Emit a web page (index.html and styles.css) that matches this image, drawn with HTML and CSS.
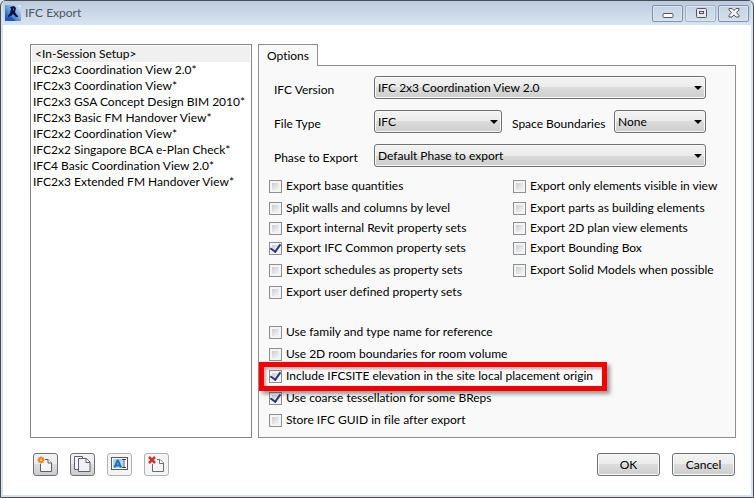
FILE: index.html
```html
<!DOCTYPE html>
<html lang="en">
<head>
<meta charset="utf-8">
<title>IFC Export</title>
<link rel="stylesheet" href="styles.css">
</head>
<body>
<div class="window">
  <header class="titlebar">
    <svg class="logo" width="16" height="16" viewBox="0 0 16 16" aria-hidden="true">
      <defs>
        <linearGradient id="logo-bg" x1="0" y1="1" x2="1" y2="0">
          <stop offset="0" stop-color="#0b3c9c"/>
          <stop offset=".45" stop-color="#5f96d6"/>
          <stop offset="1" stop-color="#e4f0fa"/>
        </linearGradient>
      </defs>
      <rect width="16" height="16" fill="url(#logo-bg)"/>
      <path d="M5 2l4-1 2 2-1 4 1 2 2 2v1h-2L8 9 6 11l-3 1v-1l2-3 1-4z" fill="#0c1440"/>
      <path d="M8 3l1 1-1 2z" fill="#6f95cf"/>
      <path d="M0 13l6-1 5 4H0z" fill="#1c57bd"/>
    </svg>
    <h1 class="title">IFC Export</h1>
    <div class="caption-buttons">
      <button class="caption" type="button" aria-label="Minimize">
        <svg width="12" height="10" viewBox="0 0 12 10"><rect x="1" y="5.500" width="10" height="4" rx="1" fill="#fff" stroke="#535666"/></svg>
      </button>
      <button class="caption caption-off" type="button" aria-label="Maximize">
        <svg width="12" height="10" viewBox="0 0 12 10"><rect x="1.500" y=".5" width="10" height="9" rx="1" fill="#e8e6e6" stroke="#535666"/><rect x="4.500" y="3.500" width="4" height="2" fill="#cfdbe8" stroke="#535666"/></svg>
      </button>
      <button class="caption" type="button" aria-label="Close">
        <svg width="12" height="10" viewBox="0 0 12 10"><path d="M1 .5h3l2 2 2-2h3v1.500L8.500 4.500 11 7.500v1.500H8l-2-2-2 2H1v-1.500l2.500-3L1 2z" fill="#f4f2f2" stroke="#535666"/></svg>
      </button>
    </div>
  </header>

  <main class="client">
    <div class="columns">
      <select class="setups" size="20" aria-label="Export setups">
        <option class="current">&lt;In-Session Setup&gt;</option>
        <option>IFC2x3 Coordination View 2.0*</option>
        <option>IFC2x3 Coordination View*</option>
        <option>IFC2x3 GSA Concept Design BIM 2010*</option>
        <option>IFC2x3 Basic FM Handover View*</option>
        <option>IFC2x2 Coordination View*</option>
        <option>IFC2x2 Singapore BCA e-Plan Check*</option>
        <option>IFC4 Basic Coordination View 2.0*</option>
        <option>IFC2x3 Extended FM Handover View*</option>
      </select>

      <section class="tabs">
        <button class="tab" type="button">Options</button>
        <div class="panel">
          <div class="fields">
            <div class="field">
              <label class="field-name" for="version">IFC Version</label>
              <span class="drop"><select id="version"><option>IFC 2x3 Coordination View 2.0</option></select></span>
            </div>
            <div class="field">
              <label class="field-name" for="filetype">File Type</label>
              <span class="drop"><select id="filetype"><option>IFC</option></select></span>
              <label class="field-mid" for="space">Space Boundaries</label>
              <span class="drop drop-small"><select id="space"><option>None</option></select></span>
            </div>
            <div class="field">
              <label class="field-name" for="phase">Phase to Export</label>
              <span class="drop"><select id="phase"><option>Default Phase to export</option></select></span>
            </div>
          </div>

          <div class="checks checks-two">
            <label class="check"><input type="checkbox">Export base quantities</label>
            <label class="check"><input type="checkbox">Export only elements visible in view</label>
            <label class="check"><input type="checkbox">Split walls and columns by level</label>
            <label class="check"><input type="checkbox">Export parts as building elements</label>
            <label class="check"><input type="checkbox">Export internal Revit property sets</label>
            <label class="check"><input type="checkbox">Export 2D plan view elements</label>
            <label class="check"><input type="checkbox" checked>Export IFC Common property sets</label>
            <label class="check"><input type="checkbox">Export Bounding Box</label>
            <label class="check"><input type="checkbox">Export schedules as property sets</label>
            <label class="check"><input type="checkbox">Export Solid Models when possible</label>
            <label class="check"><input type="checkbox">Export user defined property sets</label>
          </div>

          <div class="checks">
            <label class="check"><input type="checkbox">Use family and type name for reference</label>
            <label class="check"><input type="checkbox">Use 2D room boundaries for room volume</label>
            <label class="check marked"><input type="checkbox" checked>Include IFCSITE elevation in the site local placement origin</label>
            <label class="check"><input type="checkbox" checked>Use coarse tessellation for some BReps</label>
            <label class="check"><input type="checkbox">Store IFC GUID in file after export</label>
          </div>
        </div>
      </section>
    </div>

    <footer class="footer">
      <button class="tool" type="button" aria-label="New setup">
        <svg width="17" height="17" viewBox="0 0 17 17"><path d="M3.500 8v7.500h11V7l-3.500-3.500H8" fill="#f4f5f8" stroke="#5b5e68"/><path d="M11 3.500V7h3.500" fill="#fff" stroke="#5b5e68"/><path d="M4 .5v7M.5 4h7M1.500 1.500l5 5M6.500 1.500l-5 5" stroke="#f07a1c" stroke-width="1.500"/><circle cx="4" cy="4" r="2" fill="#ffd83a" stroke="#e8651b"/></svg>
      </button>
      <button class="tool" type="button" aria-label="Duplicate setup">
        <svg width="17" height="17" viewBox="0 0 17 17"><path d="M4 13.500H.5V.5h8V2" fill="#f4f5f8" stroke="#5b5e68"/><path d="M4.500 2.500h8l3.500 3.500v9.500H4.500z" fill="#f0f1f5" stroke="#5b5e68"/><path d="M12 2.500V6.500h4" fill="#fff" stroke="#5b5e68"/></svg>
      </button>
      <button class="tool tool-off" type="button" aria-label="Rename setup">
        <svg width="17" height="17" viewBox="0 0 17 17"><rect x=".5" y="1.500" width="16" height="12" fill="#fff" stroke="#555a66"/><rect x="2" y="3" width="10" height="9" fill="#a9d5f0"/><path d="M3.500 11.500l3-7h.5l3 7M5 9.500h4" fill="none" stroke="#1f6fc0" stroke-width="2"/><path d="M11 3.500h4M13 3.500v8M11 11.500h4" stroke="#444854" fill="none"/></svg>
      </button>
      <button class="tool tool-off" type="button" aria-label="Delete setup">
        <svg width="17" height="17" viewBox="0 0 17 17"><path d="M4.500 8v7.500h11V7l-3.500-3.500H9" fill="#f4f5f8" stroke="#6a6d77"/><path d="M11.500 3.500V7.500h4" fill="#fff" stroke="#6a6d77"/><path d="M1 1l6 6M7 1L1 7" stroke="#d0312d" stroke-width="2.500"/></svg>
      </button>
      <button class="push push-first" type="button">OK</button>
      <button class="push" type="button">Cancel</button>
    </footer>
  </main>
</div>
</body>
</html>
```
FILE: styles.css
```css
* { box-sizing: border-box; }

body {
  margin: 0;
  background: #dfe3e8;
  color: #000;
  font: 12px/16px Lato, "Open Sans", sans-serif;
  font-variant-ligatures: none;
}

button, select, input { font: inherit; color: inherit; margin: 0; }

.window {
  display: flex;
  flex-direction: column;
  min-height: 100vh;
  padding: 0 2px 2px;
  border: 1px solid #4b4b52;
  border-radius: 6px 6px 0 0;
  background: #d7e2f0;
}

.titlebar {
  display: flex;
  align-items: center;
  height: 24px;
  padding: 0 2px;
  background: linear-gradient(#bccbdd, #d7e4f2);
}

.logo { margin-right: 4px; }

.title {
  flex: 1;
  margin: 0;
  color: #4c5561;
  font-size: 12px;
  font-weight: 400;
}

.caption-buttons { display: flex; gap: 2px; }

.caption {
  display: flex;
  align-items: center;
  justify-content: center;
  width: 31px;
  height: 17px;
  padding: 0;
  border: 1px solid #7f8fae;
  border-radius: 2px;
  background: linear-gradient(#c6d4e4, #d2dfed);
  box-shadow: inset 0 0 0 1px #dae5f0;
}

.caption-off { border-color: #a4b1c5; }

.client {
  flex: 1;
  display: flex;
  flex-direction: column;
  padding: 19px 15px 19px 27px;
  background: #fff;
}

.columns { flex: 1; display: flex; gap: 6px; }

.setups {
  flex: none;
  width: 222px;
  padding: 1px;
  border: 1px solid #828790;
  border-radius: 0;
  background: #fff;
  overflow: hidden;
  outline: 0;
}

.setups option {
  height: 16px;
  min-height: 16px;
  padding: 0 1px;
  line-height: 16px;
}

.setups .current { padding-left: 3px; background: #f0f0f0; }

.tabs { flex: 1; display: flex; flex-direction: column; align-items: flex-start; }

.tab {
  z-index: 1;
  height: 22px;
  margin-bottom: -1px;
  padding: 0 8px;
  border: 1px solid #8c8e94;
  border-bottom: 0;
  background: #f9f9f9;
}

.panel {
  flex: 1;
  align-self: stretch;
  padding: 10px 10px 5px;
  border: 1px solid #8c8e94;
  background: #f9f9f9;
}

.fields {
  display: flex;
  flex-direction: column;
  gap: 11px;
  padding: 0 19px 8px 5px;
}

.field { display: flex; align-items: center; }
.field-name { width: 100px; padding-top: 4px; }
.field-mid { padding: 4px 0 0 10px; width: 112px; }

.drop { position: relative; flex: 1; display: flex; }
.drop-small { flex: 0 0 92px; }

.drop select {
  appearance: none;
  width: 100%;
  height: 23px;
  padding: 0 20px 0 3px;
  border: 1px solid #707070;
  border-radius: 3px;
  background: linear-gradient(#f3f3f3, #ebebeb 50%, #dcdcdc 50%, #cdcdcd);
  box-shadow: inset 0 0 0 1px #f8f8f8;
}

.drop::after {
  content: "";
  position: absolute;
  top: 10px;
  right: 4px;
  border: 4px solid transparent;
  border-top-color: #000;
  border-bottom: 0;
  pointer-events: none;
}

.checks { display: grid; grid-auto-rows: 22px; justify-items: start; }

.checks-two {
  grid-template-columns: 244px 1fr;
  grid-template-rows: 22px 22px 18px 22px 22px 22px;
  margin-bottom: 18px;
}

.check { display: flex; align-items: center; gap: 4px; white-space: nowrap; }

.check input {
  appearance: none;
  display: grid;
  width: 13px;
  height: 13px;
  border: 1px solid #8e8f8f;
  background: linear-gradient(135deg, #c9cdd3, #f6f6f6) content-box, #f4f4f4;
  padding: 2px;
}

.check input:checked::after {
  content: "";
  place-self: center;
  width: 5px;
  height: 8px;
  margin-top: -3px;
  border: solid #31347c;
  border-width: 0 2px 2px 0;
  transform: rotate(35deg);
}

.marked { position: relative; }

.marked::after {
  content: "";
  position: absolute;
  inset: -3px -14px -4px -10px;
  border: 5px solid #f80000;
  box-shadow: 3px 3px 4px rgba(0, 0, 0, .4), inset 2px 2px 3px rgba(0, 0, 0, .3);
}

.footer { display: flex; gap: 12px; padding: 15px 1px 0 3px; }

.tool {
  display: flex;
  align-items: center;
  justify-content: center;
  width: 25px;
  height: 23px;
  padding: 0;
  border: 1px solid #707070;
  border-radius: 3px;
  background: linear-gradient(#f3f3f3, #ebebeb 50%, #dcdcdc 50%, #cdcdcd);
}

.tool-off { border-color: #adb2b5; background: #f4f4f4; }

.push {
  width: 63px;
  height: 23px;
  padding: 0;
  border: 1px solid #707070;
  border-radius: 3px;
  background: linear-gradient(#f3f3f3, #ebebeb 50%, #dcdcdc 50%, #cdcdcd);
  box-shadow: inset 0 0 0 1px #f8f8f8;
}

.push-first { margin-left: auto; }
```
